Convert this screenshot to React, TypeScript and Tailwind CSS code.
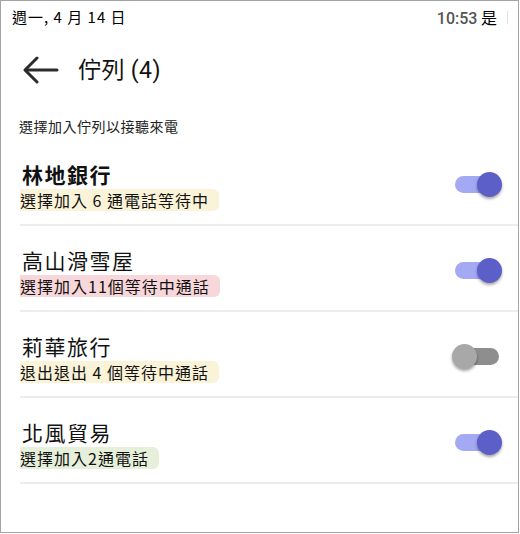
const cjk = "font-['Noto_Sans_CJK_TC','Noto_Sans',sans-serif]";

interface QueueItem {
  name: string;
  bold?: boolean;
  detail: string;
  tint: string;
  on: boolean;
}

const queues: QueueItem[] = [
  { name: '林地銀行', bold: true, detail: '選擇加入 6 通電話等待中', tint: 'bg-[#fbf3d8]', on: true },
  { name: '高山滑雪屋', detail: '選擇加入11個等待中通話', tint: 'bg-[#f8d7da]', on: true },
  { name: '莉華旅行', detail: '退出退出 4 個等待中通話', tint: 'bg-[#fbf3d8]', on: false },
  { name: '北風貿易', detail: '選擇加入2通電話', tint: 'bg-[#e6efda]', on: true },
];

const Toggle = ({ on }: { on: boolean }) => (
  <div className="relative h-[25px] w-[50px] shrink-0">
    <div
      className={`absolute left-[3px] right-[3px] top-[4px] h-[17px] rounded-full ${
        on ? 'bg-[#a4a9f3]' : 'bg-[#8e8e8e]'
      }`}
    />
    <div
      className={`absolute top-0 h-[25px] w-[25px] rounded-full shadow-[0_2px_3px_rgba(0,0,0,0.35)] ${
        on ? 'right-0 bg-[#5b5fc7]' : 'left-0 bg-[#a8a8a8]'
      }`}
    />
  </div>
);

const BackArrow = () => (
  <svg width="36" height="28" viewBox="0 0 36 28" fill="none" stroke="#2b2b2b" strokeWidth="3" strokeLinecap="round" strokeLinejoin="round">
    <path d="M34 14H3" />
    <path d="M14 2L2 14l12 12" />
  </svg>
);

export default function App() {
  return (
    <div className={`h-[533px] w-[519px] border border-[#a3a3a3] bg-white ${cjk}`}>
      {/* status bar */}
      <div className="flex h-[33px] items-center justify-between pl-[11px] pr-[10px]">
        <span className="text-[15px] tracking-[1px] text-black">週一, 4 月 14 日</span>
        <div className="flex items-center gap-[10px]">
          <span className="text-[16px] text-black">
            <span className="font-['Roboto',sans-serif] font-medium text-[#555]">10:53</span> 是
          </span>
          <span className="h-[13px] w-px bg-[#e2e2e2]" />
        </div>
      </div>

      {/* header */}
      <div className="flex h-[72px] items-center pl-[22px]">
        <BackArrow />
        <h1 className="ml-[19px] text-[23px] tracking-[0.5px] text-[#111]">
          佇列 <span className="font-['Roboto',sans-serif]">(4)</span>
        </h1>
      </div>

      <p className="pl-[18px] pt-[10px] text-[14px] leading-[20px] tracking-[0.5px] text-[#222]">
        選擇加入佇列以接聽來電
      </p>

      <ul className="mt-[4px] pl-[19px]">
        {queues.map((q) => (
          <li key={q.name} className="flex h-[86px] border-b-2 border-[#ededed] pr-[16px]">
            <div className="flex-1 pt-[20px]">
              <div
                className={`pl-[2px] text-[21px] leading-[28px] tracking-[1.5px] text-[#111] ${
                  q.bold ? 'font-bold' : ''
                }`}
              >
                {q.name}
              </div>
              <span
                className={`inline-block rounded-r-md pr-[10px] text-[16px] leading-[22px] tracking-[1px] text-[#111] ${q.tint}`}
              >
                {q.detail}
              </span>
            </div>
            <div className="mt-[32px]">
              <Toggle on={q.on} />
            </div>
          </li>
        ))}
      </ul>
    </div>
  );
}
